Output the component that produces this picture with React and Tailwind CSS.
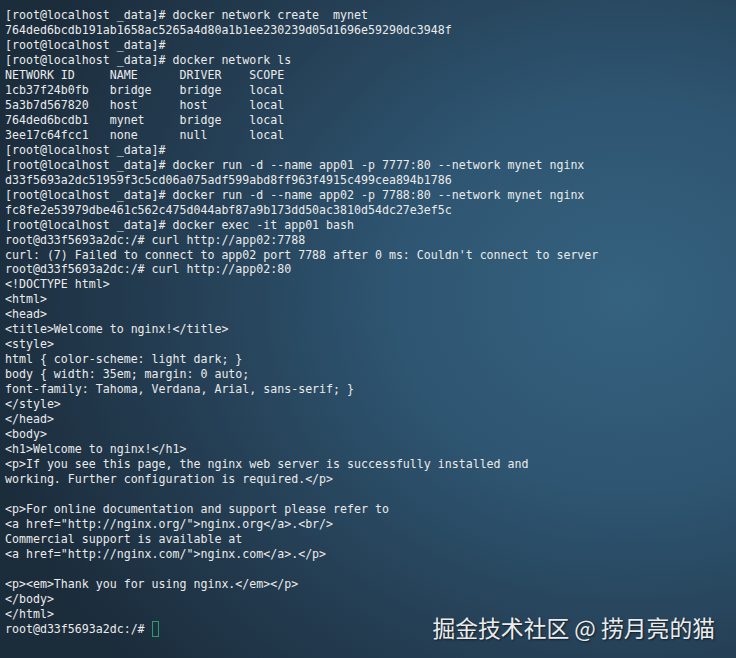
export default function App() {
  const lines = [
    "[root@localhost _data]# docker network create  mynet",
    "764ded6bcdb191ab1658ac5265a4d80a1b1ee230239d05d1696e59290dc3948f",
    "[root@localhost _data]#",
    "[root@localhost _data]# docker network ls",
    "NETWORK ID     NAME      DRIVER    SCOPE",
    "1cb37f24b0fb   bridge    bridge    local",
    "5a3b7d567820   host      host      local",
    "764ded6bcdb1   mynet     bridge    local",
    "3ee17c64fcc1   none      null      local",
    "[root@localhost _data]#",
    "[root@localhost _data]# docker run -d --name app01 -p 7777:80 --network mynet nginx",
    "d33f5693a2dc51959f3c5cd06a075adf599abd8ff963f4915c499cea894b1786",
    "[root@localhost _data]# docker run -d --name app02 -p 7788:80 --network mynet nginx",
    "fc8fe2e53979dbe461c562c475d044abf87a9b173dd50ac3810d54dc27e3ef5c",
    "[root@localhost _data]# docker exec -it app01 bash",
    "root@d33f5693a2dc:/# curl http://app02:7788",
    "curl: (7) Failed to connect to app02 port 7788 after 0 ms: Couldn't connect to server",
    "root@d33f5693a2dc:/# curl http://app02:80",
    "<!DOCTYPE html>",
    "<html>",
    "<head>",
    "<title>Welcome to nginx!</title>",
    "<style>",
    "html { color-scheme: light dark; }",
    "body { width: 35em; margin: 0 auto;",
    "font-family: Tahoma, Verdana, Arial, sans-serif; }",
    "</style>",
    "</head>",
    "<body>",
    "<h1>Welcome to nginx!</h1>",
    "<p>If you see this page, the nginx web server is successfully installed and",
    "working. Further configuration is required.</p>",
    "",
    "<p>For online documentation and support please refer to",
    '<a href="http://nginx.org/">nginx.org</a>.<br/>',
    "Commercial support is available at",
    '<a href="http://nginx.com/">nginx.com</a>.</p>',
    "",
    "<p><em>Thank you for using nginx.</em></p>",
    "</body>",
    "</html>",
  ];
  return (
    <div className="relative w-[736px] h-[658px] overflow-hidden bg-[radial-gradient(ellipse_90%_85%_at_85%_45%,#35627f_0%,#2e5571_35%,#243d52_70%,#1b2c3b_100%)]">
      <div
        className="pl-[5px] pt-[8px] text-[11.6px] leading-[14.98px] text-[#ebebeb] whitespace-pre"
        style={{ fontFamily: '"DejaVu Sans Mono", "Liberation Mono", monospace' }}
      >
        {lines.map((l, i) => (
          <div key={i} className="h-[14.98px]">{l}</div>
        ))}
        <div className="h-[14.98px] flex items-center">
          <span>root@d33f5693a2dc:/# </span>
          <span className="inline-block w-[7px] h-[16px] border border-[#2a9d6a]" />
        </div>
      </div>
      <div
        className="absolute right-[21px] bottom-[16px] text-[22.8px] leading-[28px] text-[#ececec] [text-shadow:1px_1px_2px_rgba(0,0,0,0.6)]"
        style={{ fontFamily: '"Noto Sans CJK SC", "Noto Sans", sans-serif' }}
      >
        掘金技术社区 @ 捞月亮的猫
      </div>
    </div>
  );
}
